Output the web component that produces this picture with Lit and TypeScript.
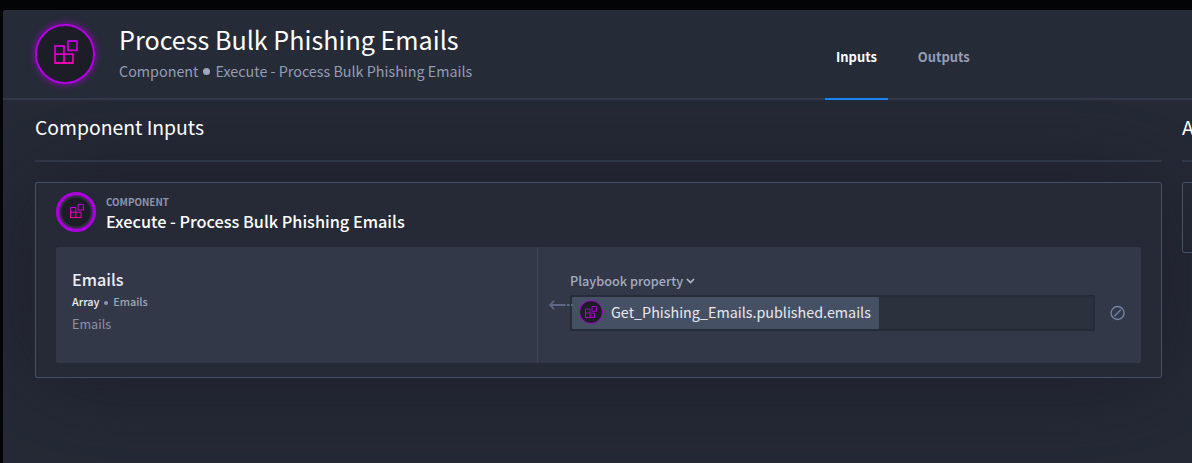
import { LitElement, html, css, svg } from "lit";
import { customElement, property } from "lit/decorators.js";

@customElement("block-badge")
class BlockBadge extends LitElement {
  @property({ reflect: true }) size = "large";

  static styles = css`
    :host {
      display: grid;
      place-items: center;
      box-sizing: border-box;
      border-radius: 50%;
      background: #1c1d26;
      flex: none;
    }
    :host([size="large"]) {
      width: 60px;
      height: 60px;
      border: 2px solid #b200e0;
      box-shadow: 0 0 7px 1px rgba(178, 0, 224, 0.6);
    }
    :host([size="medium"]) {
      width: 40px;
      height: 40px;
      border: 3px solid #ab00dc;
      box-shadow: inset 0 0 0 0.5px #ab00dc, inset 0 0 0 2.5px #2b303c;
    }
    :host([size="small"]) {
      width: 24px;
      height: 24px;
      border: 1px solid #a60cd0;
    }
    svg {
      display: block;
    }
    .large {
      width: 24px;
      height: 24px;
      margin: -4px 0 0 2px;
    }
    .medium {
      width: 14px;
      height: 14px;
      margin: -2px 0 0 2px;
    }
    .small {
      width: 12px;
      height: 12px;
    }
  `;

  render() {
    return html`<svg class=${this.size} viewBox="0 0 24 24" fill="none">
      <defs>
        <linearGradient id="g" gradientUnits="userSpaceOnUse" x1="0" y1="0" x2="0" y2="24">
          <stop offset="0" stop-color="#b400e0"></stop>
          <stop offset="1" stop-color=${this.size === "small" ? "#b400d8" : "#f000b0"}></stop>
        </linearGradient>
      </defs>
      ${svg`<g stroke="url(#g)" stroke-width="1.8" stroke-linejoin="round">
        <path d="M1 6h9v17h-9zM1 14.2h18v8.8h-18zM14 1h9v9.4h-9z"/>
      </g>`}
    </svg>`;
  }
}

@customElement("app-root")
class AppRoot extends LitElement {
  static styles = css`
    :host {
      display: block;
      box-sizing: border-box;
      width: 100%;
      height: 463px;
      padding: 10px 0 0 3px;
      overflow: hidden;
      background: #030406;
      color: #fff;
      font-family: "Noto Sans CJK JP", "Noto Sans CJK SC", "Open Sans", sans-serif;
      white-space: nowrap;
    }
    .shell {
      height: 453px;
      overflow: hidden;
      border-top-left-radius: 3px;
      background: #252a36;
    }
    .header {
      position: relative;
      z-index: 1;
      display: flex;
      box-sizing: border-box;
      height: 90px;
      padding-left: 32px;
      border-bottom: 2px solid #31384a;
      background: #252b37;
    }
    .header block-badge {
      margin-top: 14px;
    }
    .titles {
      width: 706px;
      padding: 12px 0 0 24px;
      box-sizing: border-box;
    }
    .title {
      font-size: 25.15px;
      line-height: 34px;
    }
    .sub {
      display: flex;
      align-items: center;
      gap: 5px;
      font-size: 14.34px;
      line-height: 26px;
      color: #959db5;
      margin-top: 2px;
    }
    .dot {
      width: 7px;
      height: 7px;
      border-radius: 50%;
      background: #9fa8c2;
    }
    .tabs {
      display: flex;
      gap: 19px;
      margin-left: 24px;
    }
    .tab {
      box-sizing: border-box;
      height: 90px;
      padding: 0 11px;
      font-size: 12.95px;
      font-weight: 700;
      line-height: 94px;
      color: #959db8;
    }
    .active {
      color: #fff;
      border-bottom: 2px solid #1683f7;
    }
    .content {
      display: grid;
      grid-template-columns: 1127px 300px;
      gap: 20px;
      padding-left: 32px;
    }
    .heading {
      position: relative;
      z-index: 1;
      height: 60px;
      border-bottom: 2px solid #2f3645;
      font-size: 19.35px;
      line-height: 54px;
    }
    .card,
    .aside {
      position: relative;
      box-sizing: border-box;
      margin-top: 20px;
      border: 1px solid #465066;
      border-radius: 2px;
    }
    .card {
      height: 196px;
      padding: 9px 20px 14px;
      background: #252a36;
      box-shadow: 0 0 100px rgba(24, 22, 33, 0.6);
    }
    .aside {
      height: 71px;
    }
    .card-head {
      display: flex;
      gap: 10px;
      height: 55px;
    }
    .kind {
      font-size: 9.8px;
      font-weight: 700;
      line-height: 20px;
      color: #8e96ae;
    }
    .name {
      font-size: 16.27px;
      font-weight: 500;
      line-height: 18px;
    }
    .panel {
      display: grid;
      grid-template-columns: 481px 1fr;
      height: 116px;
      border-radius: 2px;
      background: #323847;
    }
    .field {
      padding: 22px 0 0 16px;
    }
    .field-name {
      height: 22px;
      font-size: 16.2px;
      font-weight: 500;
      line-height: 20px;
      color: #eceef3;
    }
    .type {
      display: flex;
      align-items: center;
      gap: 5px;
      height: 22px;
      font-size: 10.8px;
      font-weight: 500;
      line-height: 20px;
      color: #a1a8bb;
    }
    .type b,
    .type span {
      margin-top: -2px;
    }
    .type b {
      color: #eceef3;
      font-weight: 500;
    }
    .type i {
      width: 4px;
      height: 4px;
      margin-top: 2px;
      border-radius: 50%;
      background: #8d95aa;
    }
    .desc {
      font-size: 12.6px;
      line-height: 22px;
      color: #8b93a7;
    }
    .value {
      display: grid;
      grid-template-columns: 32px 525px 1fr;
      border-left: 1px solid #3d4456;
      padding-top: 24px;
      align-content: start;
    }
    .source {
      grid-column: 2 / 4;
      display: flex;
      align-items: center;
      gap: 4px;
      height: 24px;
      line-height: 20px;
      font-size: 12.7px;
      font-weight: 500;
      color: #a5acc0;
      box-sizing: border-box;
      padding-bottom: 4px;
    }
    .source svg {
      margin-left: -1px;
    }
    .arrow {
      margin: 3px 0 0 11px;
      display: block;
      overflow: visible;
      position: relative;
      z-index: 1;
    }
    .input {
      display: flex;
      box-sizing: border-box;
      height: 36px;
      padding: 2px;
      border-radius: 2px;
      background: #2c313e;
      box-shadow: inset 0 0 3px 1px #242935;
    }
    .chip {
      display: flex;
      align-items: center;
      gap: 8px;
      width: 307px;
      box-sizing: border-box;
      padding: 0 0 2px 7px;
      border-radius: 1px;
      background: #465064;
      font-size: 14.33px;
      line-height: 20px;
      color: #e8eaf0;
    }
    .clear {
      align-self: center;
      margin-left: 15px;
    }
  `;

  render() {
    return html`<div class="shell">
      <div class="header">
        <block-badge size="large"></block-badge>
        <div class="titles">
          <div class="title">Process Bulk Phishing Emails</div>
          <div class="sub">
            <span>Component</span><span class="dot"></span>
            <span>Execute - Process Bulk Phishing Emails</span>
          </div>
        </div>
        <div class="tabs">
          <div class="tab active">Inputs</div>
          <div class="tab">Outputs</div>
        </div>
      </div>
      <div class="content">
        <div>
          <div class="heading">Component Inputs</div>
          <div class="card">
            <div class="card-head">
              <block-badge size="medium"></block-badge>
              <div>
                <div class="kind">COMPONENT</div>
                <div class="name">Execute - Process Bulk Phishing Emails</div>
              </div>
            </div>
            <div class="panel">
              <div class="field">
                <div class="field-name">Emails</div>
                <div class="type"><b>Array</b><i></i><span>Emails</span></div>
                <div class="desc">Emails</div>
              </div>
              <div class="value">
                <div class="source">
                  <span>Playbook property</span>
                  <svg width="9" height="6" viewBox="0 0 9 6" fill="none" stroke="#b4bacb" stroke-width="1.7">
                    <path d="M1 1l3.5 3.5L8 1" />
                  </svg>
                </div>
                <svg class="arrow" width="21" height="12" viewBox="0 0 21 12" fill="none" stroke="#5c6785" stroke-width="1.8">
                  <path d="M5 2.8L1 7L5 11.2M1 7h15.5M18 7h2.5M22 7h2" />
                </svg>
                <div class="input">
                  <div class="chip">
                    <block-badge size="small"></block-badge>
                    <span>Get_Phishing_Emails.published.emails</span>
                  </div>
                </div>
                <svg class="clear" width="16" height="16" viewBox="0 0 16 16" fill="none" stroke="#7482a5" stroke-width="1.4">
                  <circle cx="7.6" cy="8" r="6.5" />
                  <path d="M4.4 11.2L10.8 4.8" />
                </svg>
              </div>
            </div>
          </div>
        </div>
        <div>
          <div class="heading">A</div>
          <div class="aside"></div>
        </div>
      </div>
    </div>`;
  }
}
